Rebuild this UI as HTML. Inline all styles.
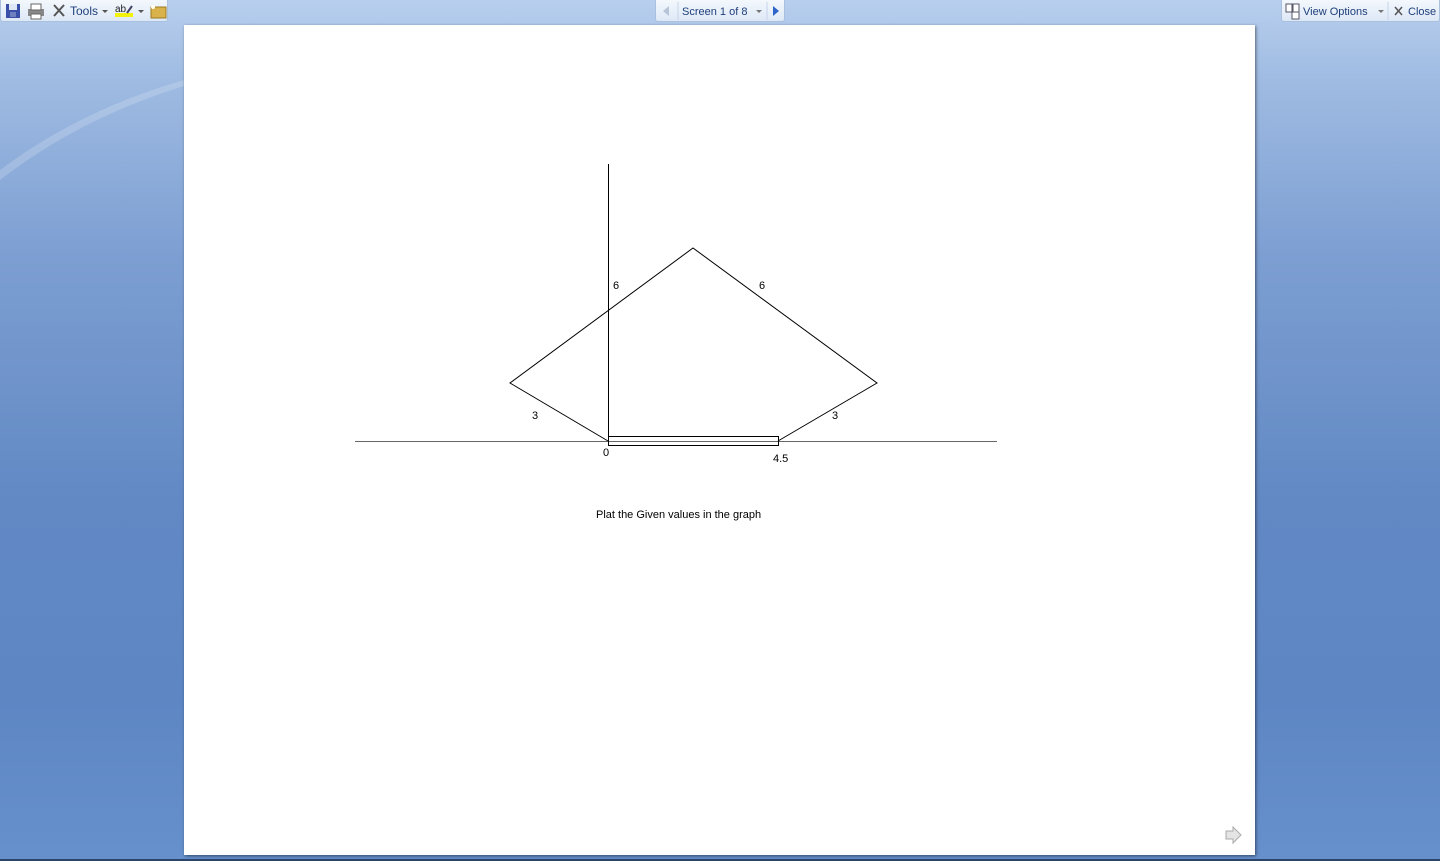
<!DOCTYPE html>
<html><head><meta charset="utf-8"><style>
html,body{margin:0;padding:0;width:1440px;height:861px;overflow:hidden;font-family:"Liberation Sans",sans-serif;}
body{background:linear-gradient(180deg,#b8cfee 0px,#9fbbe2 80px,#7d9fd2 250px,#6289c4 500px,#5d86c3 700px,#6690cc 855px);position:relative;}
.bar{position:absolute;top:0;height:22px;background:linear-gradient(#f4f8fd,#dde8f6);border:1px solid #aac0df;border-top:none;border-radius:0 0 3px 3px;box-sizing:border-box;font-size:12px;color:#1e3f7a;display:flex;align-items:center;}
.page{position:absolute;left:184px;top:25px;width:1071px;height:830px;background:#fff;box-shadow:1px 1px 3px rgba(0,0,0,.5);}
.bottom{position:absolute;left:0;top:859px;width:1440px;height:2px;background:#2b4469;}
</style></head><body>
<svg style="position:absolute;left:0;top:0" width="184" height="200"><path d="M0 170 Q80 110 184 80 L184 86 Q80 118 0 180z" fill="rgba(255,255,255,0.18)"/></svg>
<div class="bar" style="left:0;width:168px;">
 <svg width="168" height="22">
  <rect x="5" y="4" width="14" height="14" fill="#3a50a8"/><rect x="8" y="4" width="8" height="6" fill="#dfe6f5"/><rect x="9" y="12" width="6" height="5" fill="#6f80c0"/>
  <rect x="27" y="9" width="16" height="7" fill="#888"/><rect x="30" y="4" width="10" height="6" fill="#fff" stroke="#666"/><rect x="30" y="14" width="10" height="5" fill="#fff" stroke="#666"/>
  <path d="M53 5 L63 16 M63 5 L53 16" stroke="#555" stroke-width="2"/>
  <text x="69" y="15" font-size="12" fill="#1e3f7a" font-family="Liberation Sans">Tools</text>
  <path d="M101 10 l3 3 l3-3z" fill="#555"/>
  <rect x="114" y="13" width="18" height="4" fill="#f2f20a"/>
  <text x="114" y="12" font-size="10" fill="#222" font-family="Liberation Sans">ab</text>
  <path d="M126 13 l5 -7" stroke="#446" stroke-width="2"/>
  <path d="M137 10 l3 3 l3-3z" fill="#555"/>
  <rect x="150" y="7" width="15" height="11" fill="#d9b24c" stroke="#9a7a20"/><circle cx="152" cy="7" r="2" fill="#ffe"/>
 </svg>
</div>
<div class="bar" style="left:655px;width:130px;">
 <svg width="130" height="22">
  <path d="M13 6 v10 l-6 -5z" fill="#b7c3d6"/>
  <line x1="22" y1="2" x2="22" y2="20" stroke="#c5d4ea"/>
  <text x="26" y="15" font-size="11" fill="#1e3f7a" font-family="Liberation Sans">Screen 1 of 8</text>
  <path d="M100 10 l3 3 l3-3z" fill="#777"/>
  <line x1="111" y1="2" x2="111" y2="20" stroke="#c5d4ea"/>
  <path d="M117 6 v10 l6 -5z" fill="#2d64c8"/>
 </svg>
</div>
<div class="bar" style="left:1281px;width:159px;">
 <svg width="159" height="22">
  <rect x="4" y="4" width="6" height="8" fill="#fff" stroke="#556"/><rect x="11" y="4" width="6" height="8" fill="#fff" stroke="#556"/><rect x="10" y="12" width="7" height="7" fill="#fff" stroke="#556"/>
  <text x="21" y="15" font-size="11" fill="#1e3f7a" font-family="Liberation Sans">View Options</text>
  <path d="M96 10 l3 3 l3-3z" fill="#777"/>
  <line x1="106" y1="2" x2="106" y2="20" stroke="#c5d4ea"/>
  <path d="M113 7 l7 8 M120 7 l-7 8" stroke="#555" stroke-width="1.5"/>
  <text x="126" y="15" font-size="11" fill="#1e3f7a" font-family="Liberation Sans">Close</text>
 </svg>
</div>
<div class="page"></div>
<svg style="position:absolute;left:0;top:0" width="1440" height="861">
 <g stroke="#000" stroke-width="1" fill="none">
  <line x1="355" y1="441.5" x2="997" y2="441.5" stroke="#666"/>
  <line x1="608.5" y1="164" x2="608.5" y2="441"/>
  <polyline points="608,441 510,383 693,248 877,383 778,441"/>
  <rect x="608.5" y="436.5" width="170" height="9"/>
 </g>
 <g font-family="Liberation Sans" font-size="11" fill="#000">
  <text x="613" y="289">6</text>
  <text x="759" y="289">6</text>
  <text x="532" y="419">3</text>
  <text x="832" y="419">3</text>
  <text x="603" y="456">0</text>
  <text x="773" y="462">4.5</text>
  <text x="596" y="518">Plat the Given values in the graph</text>
 </g>
 <path d="M1226 831 h7 v-4 l8 8 l-8 8 v-4 h-7z" fill="#e4e4e4" stroke="#aaa"/>
</svg>
<div class="bottom"></div>
</body></html>
